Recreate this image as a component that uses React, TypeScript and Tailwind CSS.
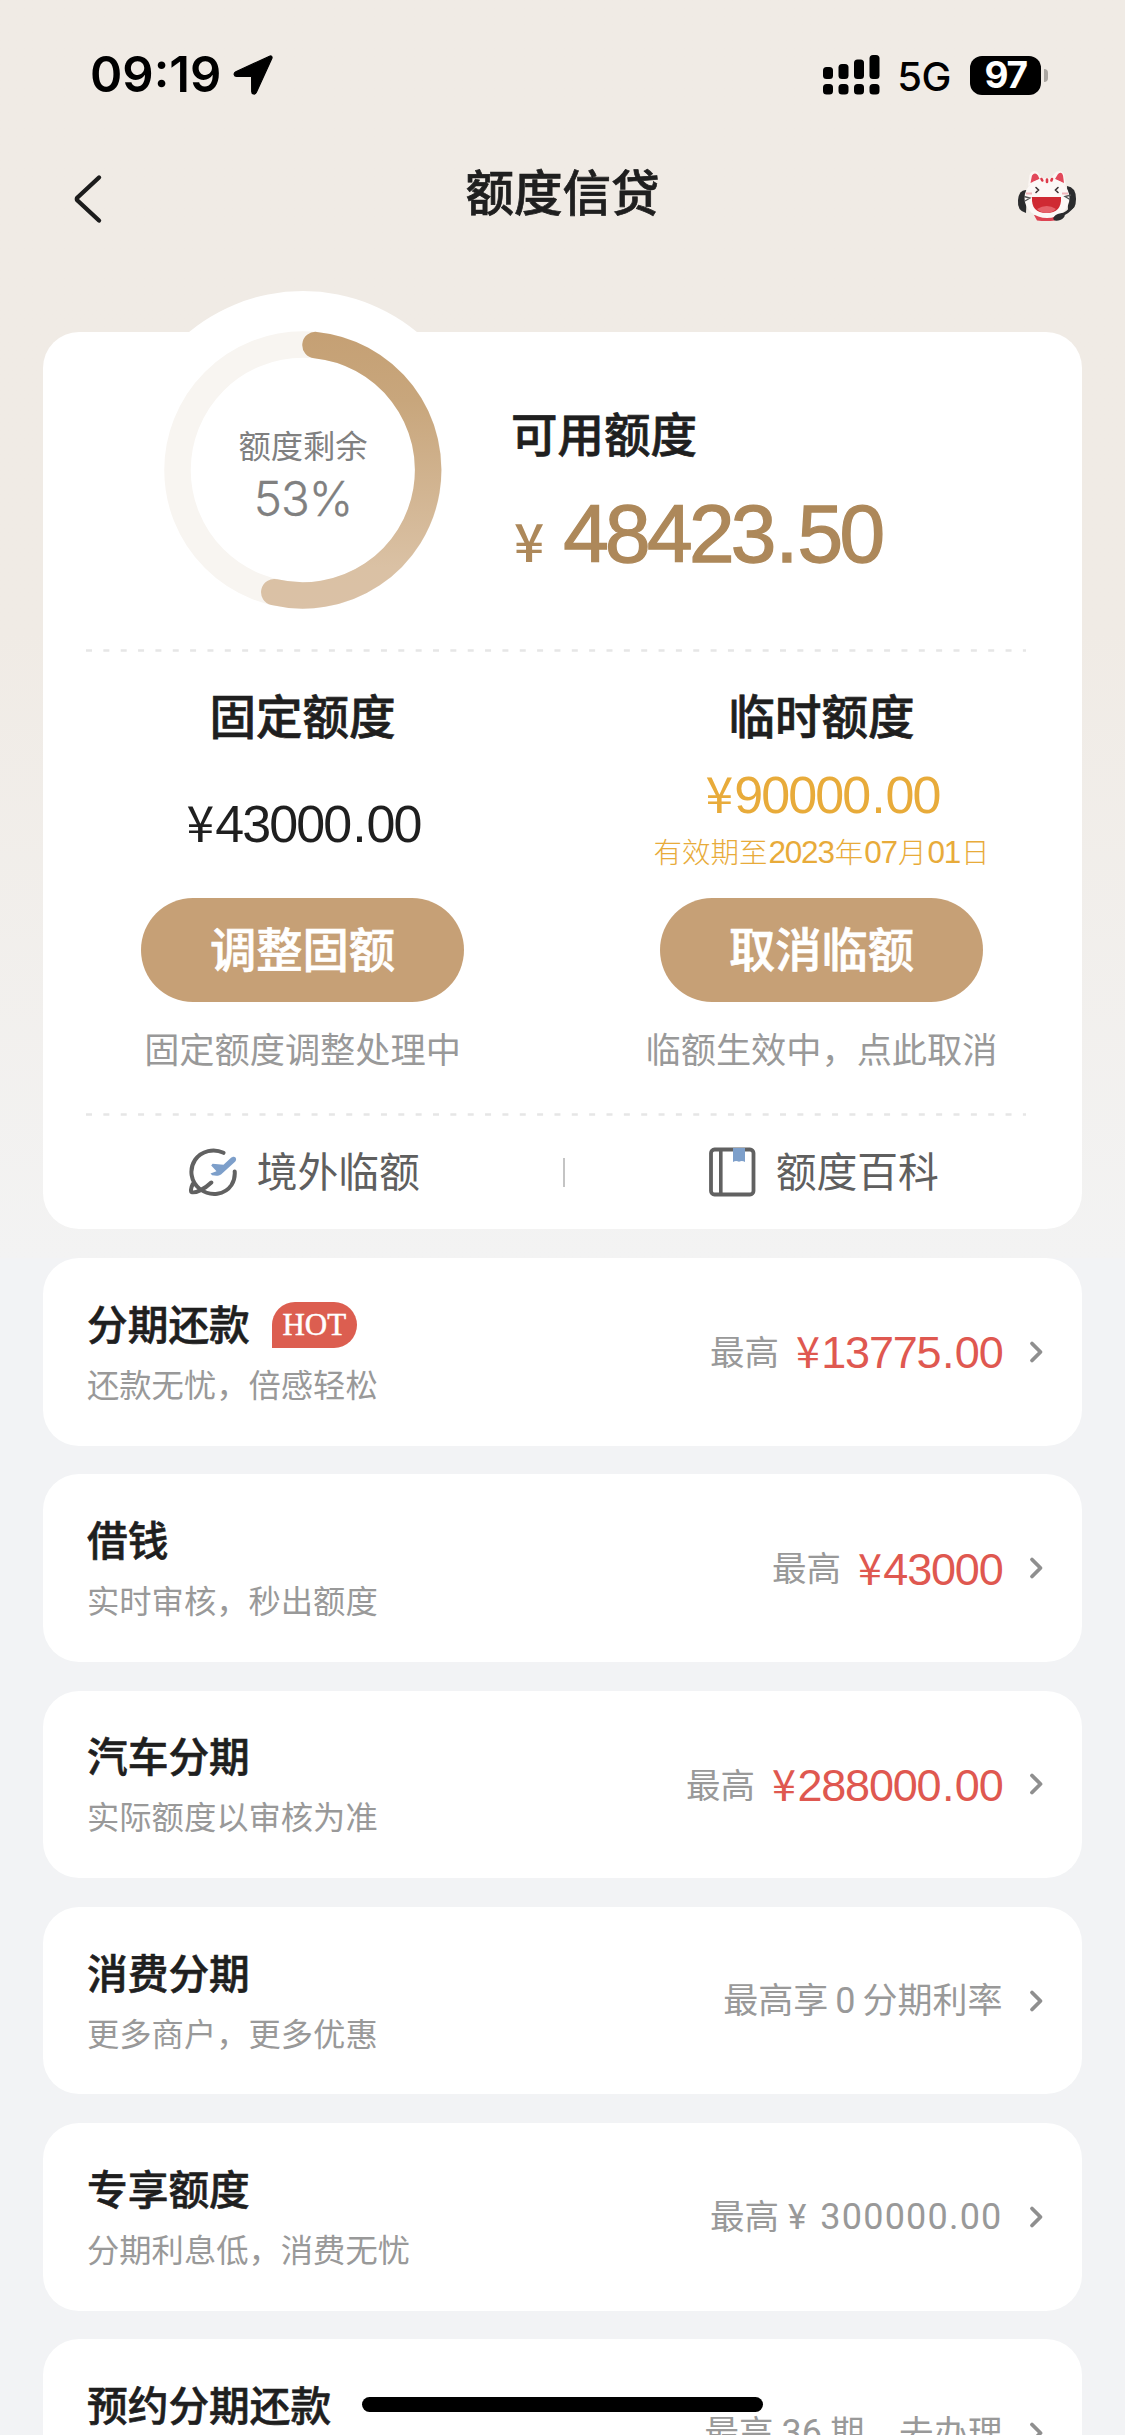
// src/App.tsx
import type { ReactNode } from "react";

type Product = {
  key: string;
  title: string;
  desc: string;
  hot?: boolean;
  extra: ReactNode;
};

const PRODUCTS: Product[] = [
  { key: "repay", title: "分期还款", desc: "还款无忧，倍感轻松", hot: true, extra: <MaxAmount value="13775.00" /> },
  { key: "loan", title: "借钱", desc: "实时审核，秒出额度", extra: <MaxAmount value="43000" /> },
  { key: "car", title: "汽车分期", desc: "实际额度以审核为准", extra: <MaxAmount value="288000.00" /> },
  {
    key: "consume",
    title: "消费分期",
    desc: "更多商户，更多优惠",
    extra: (
      <span className="pb-[3px] text-[35px]">
        最高享<span className="mx-[7px] font-[Roboto] text-[36px]">0</span>分期利率
      </span>
    ),
  },
  {
    key: "exclusive",
    title: "专享额度",
    desc: "分期利息低，消费无忧",
    extra: (
      <span className="pb-[2px]">
        最高<span className="mr-[14px] ml-[9px] font-[Roboto] text-[35px]">¥</span>
        <span className="font-[Roboto] text-[36px] tracking-[1.2px]">300000.00</span>
      </span>
    ),
  },
  {
    key: "booking",
    title: "预约分期还款",
    desc: "",
    extra: (
      <span className="pb-[3px]">
        最高<span className="mx-[8px] font-[Roboto] text-[36px]">36</span>期，去办理
      </span>
    ),
  },
];

// splits the number so the decimal point can breathe between tight digits
function Money({ value }: { value: string }) {
  const [whole, cents] = value.split(".");
  return (
    <>
      {whole}
      {cents && (
        <>
          <span className="mx-[0.035em]">.</span>
          {cents}
        </>
      )}
    </>
  );
}

function Yen() {
  return <span className="mr-[0.06em] font-['Noto_Sans_CJK_SC'] text-[0.96em] leading-none">¥</span>;
}

function MaxAmount({ value }: { value: string }) {
  return (
    <span className="flex items-center">
      <span className="pb-[3px]">最高</span>
      <span className="ml-[17px] pt-[2px] font-['Liberation_Sans'] text-[45px] leading-[48px] tracking-[-1.2px] text-[#df5850]">
        <Yen />
        <Money value={value} />
      </span>
    </span>
  );
}

function StatusBar() {
  return (
    <div className="flex h-[150px] items-center pr-[77px] pl-[90px] text-black">
      <span className="font-[Inter] text-[49px] font-semibold">09:19</span>
      <svg className="ml-[12px]" width="40" height="40" viewBox="0 0 40 40">
        <path d="M36.5 1.2 2.8 16.8c-2.6 1.3-2 4.6.9 4.6l14.2.1c.5 0 .7.2.7.7l.1 14.2c0 3 3.500 3.600 4.700.9L38.800 3.500c.8-1.800-.5-3.100-2.300-2.300z" stroke="#000" strokeWidth="1.200" />
      </svg>
      <svg className="ml-auto" width="57" height="40" viewBox="0 0 57 40">
        <rect x="0" y="12" width="10" height="12" rx="3.500" />
        <rect x="15.500" y="9" width="10" height="15" rx="3.500" />
        <rect x="31" y="4.500" width="10" height="19.500" rx="3.500" />
        <rect x="46.500" y="0" width="10" height="24" rx="3.500" />
        <rect x="0" y="29" width="10" height="10.500" rx="3.500" />
        <rect x="15.500" y="29" width="10" height="10.500" rx="3.500" />
        <rect x="31" y="29" width="10" height="10.500" rx="3.500" />
        <rect x="46.500" y="29" width="10" height="10.500" rx="3.500" />
      </svg>
      <span className="ml-[17px] pt-[3px] font-[Inter] text-[40px] font-medium tracking-[-0.5px]">5G</span>
      <div className="ml-[19px] flex h-[39px] w-[71px] items-center justify-center rounded-[12px] bg-black font-[Inter] text-[37px] font-bold tracking-[-1.500px] text-white">
        97
      </div>
      <div className="ml-[3px] h-[13px] w-[4px] rounded-r-full bg-[#aaa6a1]" />
    </div>
  );
}

function NavBar() {
  return (
    <div className="grid h-[86px] grid-cols-[1fr_auto_1fr] items-center pr-[47px] pl-[73px]">
      <svg className="mt-3 w-[62px]" height="50" viewBox="0 0 62 50" fill="none" stroke="#1c1c1c" strokeWidth="4.400" strokeLinecap="round" strokeLinejoin="round">
        <path d="M26 3.500 4.500 23.500a2 2 0 0 0 0 3L26 46.500" />
      </svg>
      <h1 className="mr-[26px] pb-[5px] text-[48.500px] leading-none font-medium text-[#1f1f1f] [-webkit-text-stroke:0.7px]">额度信贷</h1>
      <div className="flex justify-end">
        <CatIcon />
      </div>
    </div>
  );
}

function CatIcon() {
  return (
    <svg className="mt-1" width="62" height="54" viewBox="0 0 62 54">
      <path d="M18 47h24l-3 5.500q-9 1-18 0z" fill="#dd4452" />
      <path d="M11 22q-8-1-9 10t8 13z" fill="#2b2c2e" />
      <path d="M51 18q9 1 9 13t-8 11z" fill="#2b2c2e" />
      <path d="M12 18 13.500 7q3-6 8-3l5 7zM34 11l6-7q5-3 8 2l2 12z" fill="#fbf6f3" />
      <path d="M14.500 15 16 7.500q3-4 6 0l1.500 3.500zM39 11l3-5q4-3 5 1.500l1 7.500z" fill="#e2485a" />
      <ellipse cx="31" cy="30" rx="22.500" ry="20" fill="#fcf8f6" />
      <path d="m25.500 11 .8 1.500M31 11.500v2.500M36 11l-.6 1.500" stroke="#dd3b4b" strokeWidth="2.600" strokeLinecap="round" />
      <path d="m20 19.500 2.500 2.500-2.500 2.500M42 19.500l-2.500 2.500 2.500 2.500" stroke="#3d3335" strokeWidth="1.600" fill="none" strokeLinecap="round" />
      <path d="M10 25.500h6M46 25.500h6" stroke="#f0b5ba" strokeWidth="2" fill="none" />
      <path d="M8 28.500l6 1.500-5 3M55 27l-6 1.500 5 3" stroke="#555" strokeWidth="1.300" fill="none" />
      <path d="M16 29h29q1 16-14.500 16T16 29z" fill="#cf2a33" />
      <path d="M21 41q10-6 19 0-4 4-9.500 4T21 41z" fill="#e5626a" />
      <path d="M57 38q-5 7-12 9" stroke="#2b2c2e" strokeWidth="3" fill="none" />
      <ellipse cx="43" cy="49" rx="6" ry="3.200" fill="#2b2c2e" transform="rotate(-22 43 49)" />
    </svg>
  );
}

function QuotaRing({ percent }: { percent: number }) {
  return (
    <div className="relative -mt-[41px] ml-[81px] h-[358px] w-[358px] rounded-full bg-white">
      <svg width="358" height="358" viewBox="0 0 358 358" fill="none" strokeWidth="26.500">
        <defs>
          <linearGradient id="ring" x1="0" y1="40" x2="0" y2="318" gradientUnits="userSpaceOnUse">
            <stop stopColor="#c5a074" />
            <stop offset="0.25" stopColor="#c8a67c" />
            <stop offset="0.850" stopColor="#dac1a4" />
            <stop offset="1" stopColor="#dac1a6" />
          </linearGradient>
        </defs>
        <circle cx="179" cy="179" r="125.500" stroke="#f8f5f1" />
        <path d="M191.500 54.100A125.500 125.500 0 1 1 150.300 301.200" stroke="url(#ring)" strokeLinecap="round" />
      </svg>
      <div className="absolute inset-0 flex flex-col items-center pt-[135px] text-[#808080]">
        <span className="text-[32.300px] leading-[36px]">额度剩余</span>
        <span className="mt-[11px] font-[Inter] text-[47.500px] leading-[52px] font-light tracking-[-1px] [-webkit-text-stroke:0.3px]">{percent}%</span>
      </div>
    </div>
  );
}

function DashedLine() {
  return (
    <svg className="ml-[43px] block" width="944" height="3" viewBox="0 0 944 3">
      <path d="M0 1.500H940" stroke="#e6e6e6" strokeWidth="2.500" strokeDasharray="6 11.350" />
    </svg>
  );
}

function QuotaColumn({
  title,
  amount,
  until,
  action,
  note,
}: {
  title: string;
  amount: string;
  until?: ReactNode;
  action: string;
  note: string;
}) {
  return (
    <div className="flex w-[519px] flex-col items-center">
      <h3 className="mt-[38px] text-[46.500px] leading-[48px] font-medium text-[#1f1f1f] [-webkit-text-stroke:0.7px]">{title}</h3>
      {until ? (
        <div className="flex h-[160px] flex-col items-center pt-[29px] text-[#e8ab3a]">
          <span className="pl-[2px] font-['Liberation_Sans'] text-[52px] leading-[51px] tracking-[-1.900px]">
            <Yen />
            <Money value={amount} />
          </span>
          <span className="mt-[13px] text-[28.500px] leading-[34px] font-light">{until}</span>
        </div>
      ) : (
        <div className="flex h-[160px] items-start pt-[58px] pl-[2px]">
          <span className="font-['Liberation_Sans'] text-[52px] leading-[51px] tracking-[-1.900px] text-[#1f1f1f]">
            <Yen />
            <Money value={amount} />
          </span>
        </div>
      )}
      <button className="h-[104px] w-[323px] rounded-full bg-[#c6a076] pb-[6px] text-[46.300px] leading-none font-medium text-white [-webkit-text-stroke:0.7px]">
        {action}
      </button>
      <p className="mt-[28px] text-[35.200px] leading-[36px] text-[#999]">{note}</p>
    </div>
  );
}

function PlaneIcon() {
  return (
    <svg width="48" height="48" viewBox="0 0 48 48" fill="none" stroke="#616161" strokeWidth="4" strokeLinecap="round" strokeLinejoin="round">
      <path d="M34.500 4.800C25 .2 12.500 2.500 6 12-.2 21.500 1.800 34 10.800 41c11 8 25.200 5.800 31.700-4 2.500-4 3.600-8.500 3.200-13.500" />
      <path d="M3.800 36c-1.500 3-2.300 6-1.500 8 3.500 1.700 13.500-3 20-9.500" />
      <path d="M46.500 9.500c1.200 1.600.6 3.400-1 4.700L32 26.500c-2.200 1.700-5.600 1.500-8.800.8l-1.700-1.800 6-2.300-5.300-5.700 1.400-1.700 10.900 1 7-6.600c1.800-1.500 3.700-2 5-.7z" fill="#7d9fca" stroke="none" />
    </svg>
  );
}

function BookIcon() {
  return (
    <svg width="47" height="50" viewBox="0 0 47 50" fill="none">
      <rect x="2" y="2.500" width="42.500" height="45" rx="3.500" stroke="#616161" strokeWidth="3.800" />
      <path d="M11.800 3v44" stroke="#616161" strokeWidth="3.600" />
      <path d="M24 1h12v14q-3-2-6-.2-3-1.800-6 .2z" fill="#7d9fca" />
    </svg>
  );
}

function Chevron() {
  return (
    <svg className="ml-[26px]" width="15" height="24" viewBox="0 0 15 24" fill="none" stroke="#8f8f8f" strokeWidth="3.800" strokeLinecap="round" strokeLinejoin="round">
      <path d="m3 3.500 8.500 8.500L3 20.500" />
    </svg>
  );
}

function ProductCard({ product }: { product: Product }) {
  return (
    <div className="flex h-[187.500px] shrink-0 items-center rounded-[36px] bg-white pr-[38.500px] pl-[44px]">
      <div className="flex-1">
        <div className="flex h-[46px] items-center">
          <h3 className="pb-[4px] text-[40.700px] leading-[46px] font-medium text-[#1f1f1f] [-webkit-text-stroke:0.6px]">{product.title}</h3>
          {product.hot && (
            <span className="ml-[22px] flex h-[46px] w-[85px] items-center justify-center rounded-[23px] rounded-bl-none bg-[#dc5e50] font-['Liberation_Serif'] text-[31px] leading-none text-white [-webkit-text-stroke:0.5px]">
              HOT
            </span>
          )}
        </div>
        <p className="mt-[17px] mb-px h-[36px] text-[32.300px] leading-[36px] text-[#999]">{product.desc}</p>
      </div>
      <div className="flex items-center text-[34.500px] leading-none text-[#999]">
        {product.extra}
        <Chevron />
      </div>
    </div>
  );
}

export default function App() {
  return (
    <div className="relative h-[2435px] w-[1125px] overflow-hidden bg-[#f2f3f5] font-['Noto_Sans_CJK_SC',sans-serif]">
      <div className="bg-linear-to-b from-[#f0ebe5] from-50% to-[#f3f3f3] to-100% pb-[29px]">
        <StatusBar />
        <NavBar />
        <section className="mx-[43px] mt-[96px] h-[897px] rounded-[36px] bg-white">
          <div className="flex h-[317px]">
            <QuotaRing percent={53} />
            <div className="ml-[29px] pt-[76px]">
              <h2 className="text-[46.500px] leading-[48px] font-medium text-[#1f1f1f] [-webkit-text-stroke:0.7px]">可用额度</h2>
              <div className="mt-[38px] flex items-baseline text-[#ad885a]">
                <span className="ml-[3px] text-[53px] leading-[80px] font-medium">¥</span>
                <span className="ml-[19px] font-['Liberation_Sans'] text-[82px] leading-[80px] tracking-[-3.700px] [-webkit-text-stroke:1.300px]">
                  <Money value="48423.50" />
                </span>
              </div>
            </div>
          </div>
          <DashedLine />
          <div className="flex h-[461px]">
            <QuotaColumn title="固定额度" amount="43000.00" action="调整固额" note="固定额度调整处理中" />
            <QuotaColumn
              title="临时额度"
              amount="90000.00"
              until={
                <>
                  有效期至<Num>2023</Num>年<Num>07</Num>月<Num>01</Num>日
                </>
              }
              action="取消临额"
              note="临额生效中，点此取消"
            />
          </div>
          <DashedLine />
          <div className="flex h-[112px] items-center text-[40.800px] leading-none text-[#5f5f5f]">
            <div className="flex flex-1 items-center justify-center gap-[20px] pl-[3px]">
              <PlaneIcon />
              <span className="pb-[4px]">境外临额</span>
            </div>
            <div className="h-[29px] w-[2px] bg-[#c4c4c4]" />
            <div className="flex flex-1 items-center justify-center gap-[20px] pl-px">
              <BookIcon />
              <span className="pb-[4px]">额度百科</span>
            </div>
          </div>
        </section>
      </div>

      <div className="flex flex-col gap-[28.750px] px-[43px]">
        {PRODUCTS.map((p) => (
          <ProductCard key={p.key} product={p} />
        ))}
      </div>

      {/* home indicator */}
      <div className="absolute top-[2397px] left-[362px] h-[15px] w-[401px] rounded-full bg-black" />
    </div>
  );
}

function Num({ children }: { children: ReactNode }) {
  return <span className="mx-[1px] font-['Liberation_Sans'] text-[31.500px] tracking-[-1.200px]">{children}</span>;
}
